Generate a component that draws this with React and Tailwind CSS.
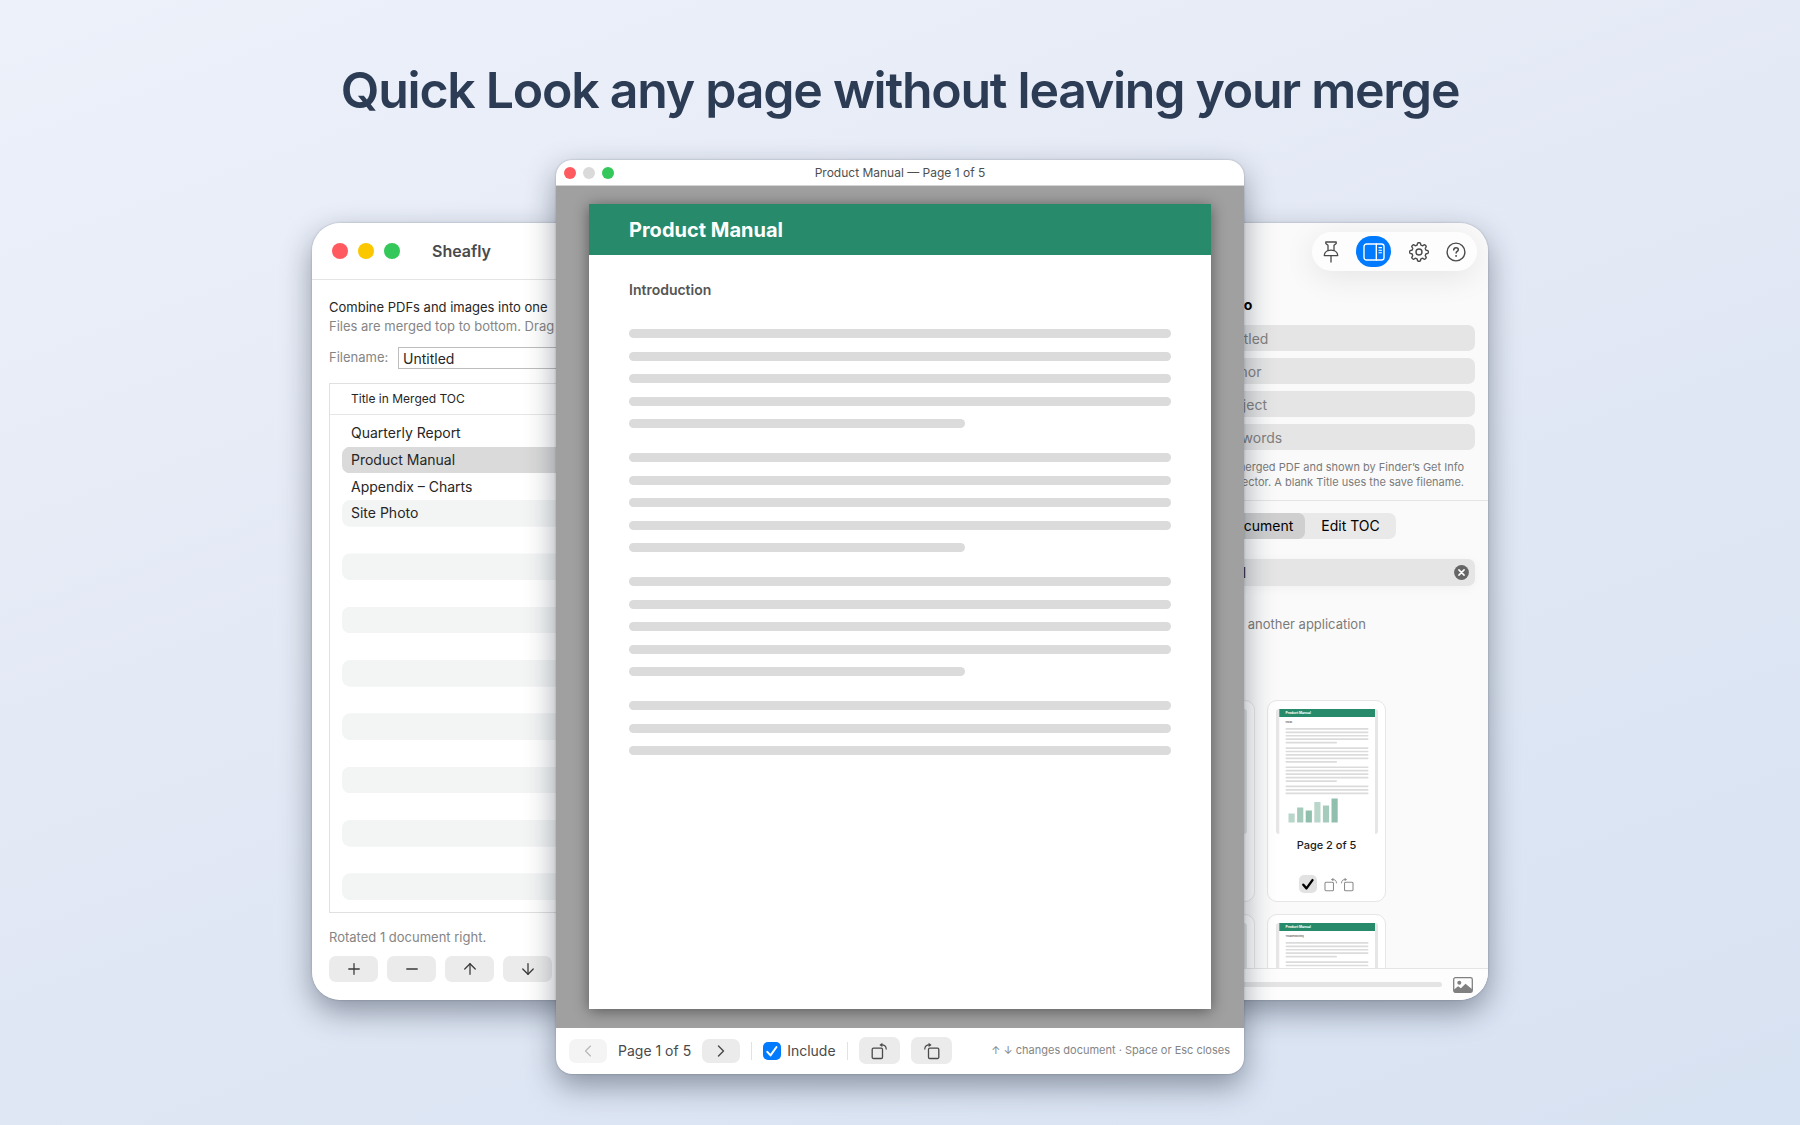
import React from "react";
import {
  ArrowDown,
  ArrowUp,
  ChevronLeft,
  ChevronRight,
  Minus,
  Plus,
} from "lucide-react";

const documents = [
  { title: "Quarterly Report", pages: 8 },
  { title: "Product Manual", pages: 5, selected: true },
  { title: "Appendix – Charts", pages: 3 },
  { title: "Site Photo", pages: 1 },
];

// The list is padded with empty striped rows down to the bottom
const rows = Array.from({ length: 18 }, (_, index) => documents[index] || null);

const infoFields = [
  { id: "info-title", label: "Title:", placeholder: "Untitled" },
  { id: "info-author", label: "Author:", placeholder: "Author" },
  { id: "info-subject", label: "Subject:", placeholder: "Subject" },
  { id: "info-keywords", label: "Keywords:", placeholder: "Keywords" },
];

const thumbnails = [
  { number: 1, heading: "Introduction" },
  { number: 2, heading: "Install", chart: true },
  { number: 3, heading: "Usage" },
  { number: 4, heading: "Troubleshooting" },
];

const chartBars = [
  { height: 9, fill: "#b9d6cb" },
  { height: 15, fill: "#a5cbbd" },
  { height: 12, fill: "#91bfae" },
  { height: 20.5, fill: "#b9d6cb" },
  { height: 17, fill: "#a5cbbd" },
  { height: 24, fill: "#91bfae" },
];

// Outline of a gear with eight rounded teeth
const gearPoints = Array.from({ length: 160 }, (_, index) => {
  const angle = (index / 160) * Math.PI * 2;
  const radius = 8.2 + Math.tanh(2.4 * Math.cos(8 * angle)) * 1.1;
  return `${(10 + radius * Math.sin(angle)).toFixed(2)},${(10 - radius * Math.cos(angle)).toFixed(2)}`;
}).join(" ");

const PinIcon = () => (
  <svg className="w-4 h-[22px]" viewBox="0 0 16 22" fill="none" stroke="currentColor" strokeWidth="1.3" strokeLinejoin="round" strokeLinecap="round">
    <path d="M2.8 1h10.4v1.4L11 4.3v5.2c2.3.9 3.6 2.6 3.7 5.1H1.3c.1-2.5 1.4-4.2 3.7-5.1V4.3L2.8 2.4z" />
    <path d="M5 9.6c1.9-.7 4.1-.7 6 0M8 14.8V21" />
  </svg>
);

const SidebarIcon = () => (
  <svg className="w-[22px] h-[18px]" viewBox="0 0 22 18" fill="none" stroke="currentColor" strokeWidth="1.4" strokeLinecap="round">
    <rect x="1" y="1" width="20" height="16" rx="2.6" />
    <path d="M13.3 1v16" />
    <path d="M16 4.6h2.5M16 7.2h2.5M16 9.8h2.5" strokeWidth="1.1" />
  </svg>
);

const GearIcon = () => (
  <svg className="w-5 h-5" viewBox="0 0 20 20" fill="none" stroke="currentColor" strokeWidth="1.4" strokeLinejoin="round">
    <polygon points={gearPoints} />
    <circle cx="10" cy="10" r="3" />
  </svg>
);

const HelpIcon = () => (
  <svg className="w-5 h-5" viewBox="0 0 20 20" fill="none" stroke="currentColor" strokeWidth="1.4" strokeLinecap="round">
    <circle cx="10" cy="10" r="8.9" />
    <path d="M7.7 7.9c.1-1.4 1-2.2 2.3-2.2 1.4 0 2.3.8 2.3 2 0 1.7-2.2 1.7-2.2 3.4" strokeWidth="1.5" />
    <circle cx="10.1" cy="13.9" r="0.95" fill="currentColor" stroke="none" />
  </svg>
);

const RotateIcon = ({ right, className }) => (
  <svg className={className} viewBox="0 0 17 18" fill="none" stroke="currentColor">
    <g transform={right ? "translate(17 0) scale(-1 1)" : undefined}>
      <rect x="1.2" y="6.2" width="10.3" height="10.3" rx="1.2" strokeWidth="1.3" />
      <path d="M10.2 2.9c3-.3 5 1.2 5 4.2" strokeWidth="1.2" strokeLinecap="round" />
      <path d="M8.4 3l3-2.2v4.3z" fill="currentColor" stroke="none" />
    </g>
  </svg>
);

const PhotoIcon = () => (
  <svg className="w-5 h-4" viewBox="0 0 20 16" fill="none">
    <rect x="0.7" y="0.7" width="18.6" height="14.6" rx="1.8" stroke="#808080" strokeWidth="1.3" />
    <circle cx="6.3" cy="5.7" r="2" fill="#808080" />
    <path d="M1 12.5l4.2-3.3 2.7 2 4.6-4.4 6.7 5.5v2.9H1z" fill="#808080" />
  </svg>
);

const TrafficLights = ({ small }) =>
  small ? (
    <div className="flex gap-[7px]">
      <span className="w-3 h-3 rounded-full bg-[#ff5a5f]" />
      <span className="w-3 h-3 rounded-full bg-[#dadada]" />
      <span className="w-3 h-3 rounded-full bg-[#34c759]" />
    </div>
  ) : (
    <div className="flex gap-[10px]">
      <span className="w-4 h-4 rounded-full bg-[#ff5a5f]" />
      <span className="w-4 h-4 rounded-full bg-[#fbc700]" />
      <span className="w-4 h-4 rounded-full bg-[#34c759]" />
    </div>
  );

// Small drawing of a manual page, as it shows in the inspector
const PageThumbnail = ({ heading, chart }) => {
  const lines = [];
  for (let group = 0; group < 4; group++) {
    const count = group === 3 ? 3 : 5;
    for (let line = 0; line < count; line++) {
      lines.push({ y: 19 + group * 19.2 + line * 3.45, width: line === 4 ? 51.5 : 83 });
    }
  }

  return (
    <svg className="w-[102px] h-[125px]" viewBox="0 0 102 125" fontFamily="Inter, sans-serif">
      <rect width="102" height="125" rx="3" fill="#e6e6e6" />
      <rect x="3.3" width="95.7" height="125" fill="#fff" />
      <rect x="3.3" width="95.7" height="8" fill="#278a6a" />
      <text x="9.5" y="5.4" fontSize="3.3" fontWeight="700" fill="#fff">
        Product Manual
      </text>
      <text x="9.5" y="14.4" fontSize="2.3" fontWeight="600" fill="#555">
        {heading}
      </text>
      {lines.map((line, index) => (
        <rect key={index} x="9.5" y={line.y} width={line.width} height="1.7" rx="0.8" fill="#dbdbdb" />
      ))}
      {chart &&
        chartBars.map((bar, index) => (
          <rect key={index} x={12.5 + index * 8.6} y={113.5 - bar.height} width="6.2" height={bar.height} fill={bar.fill} />
        ))}
    </svg>
  );
};

const ThumbnailCard = ({ number, heading, chart }) => (
  <div className="h-[202px] pt-2 flex flex-col items-center bg-white border border-[#e6e6e6] rounded-[10px]">
    <PageThumbnail heading={heading} chart={chart} />
    <p className="mt-[3px] text-[11px] leading-4 font-medium text-[#1c1c1c]">Page {number} of 5</p>
    <div className="mt-[22px] flex items-center">
      <label className="relative w-[18px] h-[18px]">
        <span className="sr-only">Include page {number}</span>
        <input type="checkbox" defaultChecked className="block appearance-none w-[18px] h-[18px] rounded-[5px] bg-[#e2e2e2]" />
        <svg className="absolute inset-0 pointer-events-none" viewBox="0 0 18 18" fill="none" stroke="#000" strokeWidth="2.4" strokeLinecap="round" strokeLinejoin="round">
          <path d="M4.3 9.7l3.2 3.7 6-8.3" />
        </svg>
      </label>
      <button aria-label="Rotate left" className="ml-[7px] text-[#8c8c8c]">
        <RotateIcon className="block w-[14px] h-[15px]" />
      </button>
      <button aria-label="Rotate right" className="ml-[2px] text-[#8c8c8c]">
        <RotateIcon right className="block w-[14px] h-[15px]" />
      </button>
    </div>
  </div>
);

const MergePane = () => (
  <div className="flex-1 min-w-0 bg-white">
    <header className="h-[57px] pl-5 flex items-center border-b border-[#e4e4e4]">
      <TrafficLights />
      <span className="ml-8 text-base font-semibold text-[#4a4a4a]">Sheafly</span>
    </header>

    <div className="pl-[17px] pr-4 pt-[18px] pb-[18px] whitespace-nowrap">
      <p className="text-[13px] leading-[19px] text-[#262626]">
        Combine PDFs and images into one
      </p>
      <p className="text-[13px] leading-[19px] text-[#858585]">
        Files are merged top to bottom. Drag rows to reorder them.
      </p>

      <div className="mt-[11px] flex items-center">
        <label htmlFor="filename" className="w-[69px] text-[13px] text-[#858585]">
          Filename:
        </label>
        <input
          id="filename"
          defaultValue="Untitled"
          className="flex-1 min-w-0 h-[22px] px-1 border border-[#bdbdbd] text-sm text-[#262626]"
        />
      </div>

      <div className="mt-[14px] pb-3 border border-[#e0e0e0]">
        <table className="w-full h-[516px] text-sm leading-5 text-[#262626]">
          <thead>
            <tr className="h-[30px] text-xs text-left border-b border-[#e6e6e6]">
              <th className="py-0 pl-[21px] font-normal">Title in Merged TOC</th>
              <th className="py-0 pr-6 text-right font-normal">Pages</th>
            </tr>
          </thead>
          <tbody>
            <tr className="h-[6px]">
              <td colSpan={2} className="p-0" />
            </tr>
            {rows.map((row, index) => (
              <tr
                key={index}
                className={
                  row && row.selected
                    ? "bg-[#dadada] [clip-path:inset(0_12px_round_8px)]"
                    : index % 2
                      ? "bg-[#f3f5f5] [clip-path:inset(0_12px_round_8px)]"
                      : "bg-white"
                }
              >
                <td className="h-[26px] pl-[21px] py-0">{row ? row.title : ""}</td>
                <td className="h-[26px] pr-6 py-0 text-right">{row ? row.pages : ""}</td>
              </tr>
            ))}
          </tbody>
        </table>
      </div>

      <p className="mt-[14px] text-[13px] leading-5 text-[#858585]">Rotated 1 document right.</p>

      <div className="mt-[9px] flex gap-[9px] text-[#3a3a3a]">
        <button aria-label="Add" className="w-[49px] h-[26px] flex items-center justify-center rounded-[7px] bg-[#ebebeb]">
          <Plus size={18} strokeWidth={1.7} />
        </button>
        <button aria-label="Remove" className="w-[49px] h-[26px] flex items-center justify-center rounded-[7px] bg-[#ebebeb]">
          <Minus size={18} strokeWidth={1.7} />
        </button>
        <button aria-label="Move up" className="w-[49px] h-[26px] flex items-center justify-center rounded-[7px] bg-[#ebebeb]">
          <ArrowUp size={18} strokeWidth={1.7} />
        </button>
        <button aria-label="Move down" className="w-[49px] h-[26px] flex items-center justify-center rounded-[7px] bg-[#ebebeb]">
          <ArrowDown size={18} strokeWidth={1.7} />
        </button>
      </div>
    </div>
  </div>
);

const InspectorPane = () => (
  <aside className="w-[367px] shrink-0 flex flex-col bg-[#fafafa] [contain:size]">
    <div className="flex-1 min-h-0 overflow-hidden">
      <div className="pt-[9px] pr-[11px] flex justify-end">
        <div className="w-[165px] h-[39px] px-[11px] flex items-center justify-between rounded-full bg-[#fdfdfd] shadow-[0_6px_32px_rgba(0,0,0,0.09)] text-[#4a4a4a]">
          <button aria-label="Keep on top">
            <PinIcon />
          </button>
          <button aria-label="Toggle inspector" className="w-[35px] h-[31px] flex items-center justify-center rounded-full bg-[#007aff] text-white">
            <SidebarIcon />
          </button>
          <button aria-label="Settings">
            <GearIcon />
          </button>
          <button aria-label="Help">
            <HelpIcon />
          </button>
        </div>
      </div>

      <div className="px-[13px]">
        <h2 className="mt-6 ml-[61px] text-sm leading-5 font-bold text-black">PDF Info</h2>
        <div className="mt-[10px] flex flex-col gap-[7px]">
          {infoFields.map((field) => (
            <div key={field.id} className="flex items-center">
              <label htmlFor={field.id} className="w-[71px] text-[13px] text-[#7a7a7a]">
                {field.label}
              </label>
              <input
                id={field.id}
                placeholder={field.placeholder}
                className="flex-1 min-w-0 h-[26px] pl-3 pr-2 rounded-[7px] bg-[#e5e5e5] text-sm placeholder:text-[#808080]"
              />
            </div>
          ))}
        </div>
        <p className="mt-[10px] pr-[11px] text-[11px] leading-[15px] text-right whitespace-nowrap text-[#7a7a7a]">
          Written to the merged PDF and shown by Finder’s Get Info
          <br />
          and its inspector. A blank Title uses the save filename.
        </p>
      </div>

      <div className="mt-[10px] pt-3 px-[13px] border-t border-[#e4e4e4]">
        <div className="flex justify-center">
          <div className="flex h-[26px] rounded-[7px] bg-[#e9e9e9] text-sm text-black">
            <button className="px-3 rounded-[7px] bg-[#cfcfcf]">Document</button>
            <button className="px-4">Edit TOC</button>
          </div>
        </div>
        <div className="relative mt-5">
          <input
            aria-label="Document title"
            defaultValue="Product Manual"
            className="block w-full h-[27px] px-2 rounded-[7px] bg-[#e5e5e5] text-sm text-[#262626] shadow-[0_2px_12px_rgba(0,0,0,0.04)]"
          />
          <button aria-label="Clear title" className="absolute right-[6px] top-[6px]">
            <svg className="block w-[15px] h-[15px]" viewBox="0 0 15 15">
              <circle cx="7.5" cy="7.5" r="7.4" fill="#666" />
              <path d="M4.9 4.9l5.2 5.2M10.1 4.9l-5.2 5.2" stroke="#fff" strokeWidth="1.5" strokeLinecap="round" />
            </svg>
          </button>
        </div>
        <p className="mt-7 pl-8 text-[13px] leading-5 text-[#7a7a7a]">Opened with another application</p>

        <div className="mt-[66px] px-[2px] grid grid-cols-[119px_119px] gap-3">
          {thumbnails.map((page) => (
            <ThumbnailCard key={page.number} {...page} />
          ))}
        </div>
      </div>
    </div>

    <footer className="h-8 pl-4 pr-[15px] flex items-center gap-[11px] border-t border-[#e4e4e4] bg-[#fdfdfd]">
      <input
        type="range"
        aria-label="Thumbnail size"
        defaultValue="10"
        className="flex-1 min-w-0 h-[5px] appearance-none rounded-full bg-[#e4e4e4]"
      />
      <PhotoIcon />
    </footer>
  </aside>
);

const MergeWindow = () => (
  <section className="[grid-area:1/1] self-start w-full mt-[63px] flex rounded-[28px] overflow-hidden shadow-[0_12px_30px_rgba(22,30,48,0.42),0_0_2px_rgba(22,30,48,0.3)]">
    <MergePane />
    <InspectorPane />
  </section>
);

const TextBlock = ({ short }) =>
  short ? (
    <div className="h-[54px] flex flex-col justify-between">
      <span className="h-[9px] rounded-full bg-[#dbdbdb]" />
      <span className="h-[9px] rounded-full bg-[#dbdbdb]" />
      <span className="h-[9px] rounded-full bg-[#dbdbdb]" />
    </div>
  ) : (
    <div className="h-[99px] flex flex-col justify-between">
      <span className="h-[9px] rounded-full bg-[#dbdbdb]" />
      <span className="h-[9px] rounded-full bg-[#dbdbdb]" />
      <span className="h-[9px] rounded-full bg-[#dbdbdb]" />
      <span className="h-[9px] rounded-full bg-[#dbdbdb]" />
      <span className="h-[9px] w-[62%] rounded-full bg-[#dbdbdb]" />
    </div>
  );

const PreviewWindow = () => (
  <section className="[grid-area:1/1] z-10 justify-self-center w-full max-w-[688px] rounded-2xl overflow-hidden bg-white shadow-[0_12px_30px_rgba(22,30,48,0.42),0_0_2px_rgba(22,30,48,0.3)]">
    <header className="h-[26px] px-2 grid grid-cols-[1fr_auto_1fr] items-center border-b border-[#d4d4d4]">
      <TrafficLights small />
      <h2 className="text-xs text-[#4f4f4f]">Product Manual — Page 1 of 5</h2>
    </header>

    <div className="px-[33px] pt-[18px] pb-[19px] bg-[#a0a0a0]">
      <article className="aspect-[17/22] bg-white shadow-[0_2px_14px_rgba(0,0,0,0.45)]">
        <h3 className="h-[51px] px-10 flex items-center bg-[#278a6a] text-xl font-bold text-white">
          Product Manual
        </h3>
        <div className="px-10 pt-[25px]">
          <h4 className="text-sm leading-5 font-semibold text-[#555]">Introduction</h4>
          <div className="mt-[29px] flex flex-col gap-[25px]">
            <TextBlock />
            <TextBlock />
            <TextBlock />
            <TextBlock short />
          </div>
        </div>
      </article>
    </div>

    <footer className="h-[46px] pl-[13px] pr-[14px] flex items-center text-sm text-[#4a4a4a]">
      <button aria-label="Previous page" disabled className="w-[38px] h-6 flex items-center justify-center rounded-[7px] bg-[#f4f4f4] text-[#b8b8b8]">
        <ChevronLeft size={20} strokeWidth={1.4} />
      </button>
      <span className="mx-[11px]">Page 1 of 5</span>
      <button aria-label="Next page" className="w-[38px] h-6 flex items-center justify-center rounded-[7px] bg-[#ebebeb]">
        <ChevronRight size={20} strokeWidth={1.7} />
      </button>
      <span className="mx-[11px] w-px h-[18px] bg-[#e2e2e2]" />
      <label className="relative flex items-center gap-[6px]">
        <input type="checkbox" defaultChecked className="appearance-none w-[18px] h-[18px] rounded-[5px] bg-[#007aff]" />
        <svg className="absolute left-0 w-[18px] h-[18px] pointer-events-none" viewBox="0 0 18 18" fill="none" stroke="#fff" strokeWidth="2" strokeLinecap="round" strokeLinejoin="round">
          <path d="M4.3 9.8l3.2 3.6 6-8.4" />
        </svg>
        Include
      </label>
      <span className="mx-[11px] w-px h-[18px] bg-[#e2e2e2]" />
      <button aria-label="Rotate left" className="w-[41px] h-[27px] flex items-center justify-center rounded-[7px] bg-[#ebebeb]">
        <RotateIcon className="w-[17px] h-[18px]" />
      </button>
      <button aria-label="Rotate right" className="ml-[11px] w-[41px] h-[27px] flex items-center justify-center rounded-[7px] bg-[#ebebeb]">
        <RotateIcon right className="w-[17px] h-[18px]" />
      </button>
      <span className="ml-auto text-[11px] text-[#858585]">↑ ↓ changes document · Space or Esc closes</span>
    </footer>
  </section>
);

const App = () => {
  return (
    <main className="min-h-screen pb-12 font-['Inter',sans-serif] bg-[linear-gradient(160deg,#edf1fa_0%,#e3e9f5_45%,#d7e2f2_100%)]">
      <h1 className="pt-[58px] pb-[38px] text-[50px] leading-[64px] font-semibold tracking-tight text-center text-[#2c3c54]">
        Quick Look any page without leaving your merge
      </h1>
      <div className="mx-auto max-w-[1176px] grid">
        <MergeWindow />
        <PreviewWindow />
      </div>
    </main>
  );
};

export default App;
